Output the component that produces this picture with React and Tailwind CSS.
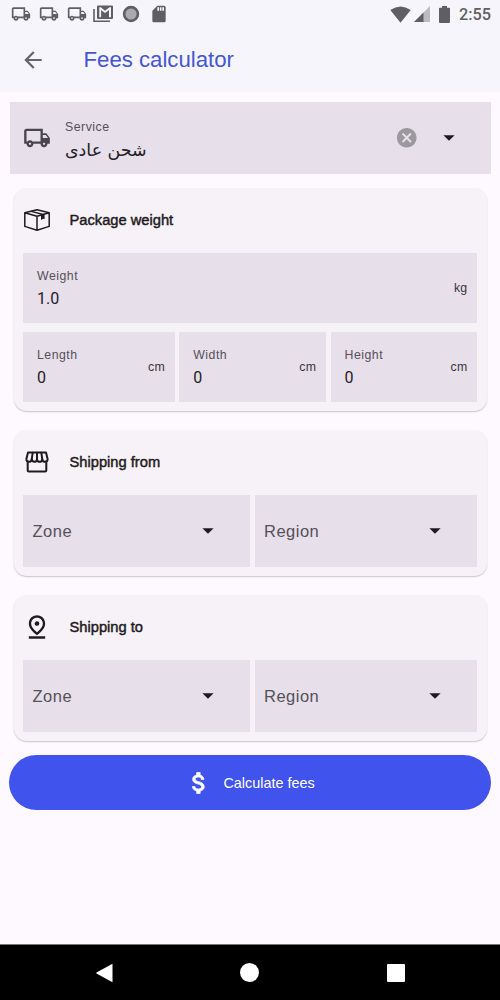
import React from "react";
import {
  MdOutlineLocalShipping,
  MdOutlinePinDrop,
  MdArrowBack,
  MdCancel,
  MdSdCard,
} from "react-icons/md";

function Caret() {
  return (
    <svg className="h-[6px] w-[12px] shrink-0" viewBox="0 0 12 6">
      <path d="M.4 .3h11.2L6 5.8z" fill="#1d1b20" />
    </svg>
  );
}

function DollarIcon() {
  return (
    <svg className="mr-[10px] size-7" viewBox="0 0 24 24">
      <path
        d="M11.800 10.900c-2.270-.590-3-1.200-3-2.150 0-1.090 1.010-1.850 2.700-1.850 1.780 0 2.440.850 2.500 2.100h2.210c-.070-1.720-1.120-3.300-3.210-3.810V3h-3v2.160c-1.940.420-3.500 1.680-3.500 3.610 0 2.310 1.910 3.460 4.700 4.130 2.500.600 3 1.480 3 2.410 0 .690-.490 1.790-2.700 1.790-2.060 0-2.870-.920-2.980-2.100h-2.200c.120 2.190 1.760 3.420 3.680 3.830V21h3v-2.150c1.950-.370 3.500-1.500 3.500-3.550 0-2.840-2.430-3.810-4.700-4.400z"
        fill="white"
        stroke="white"
        strokeWidth=".6"
      />
    </svg>
  );
}

function PackageIcon() {
  return (
    <svg className="h-6 w-7" viewBox="0 0 28 24" fill="none" stroke="#1d1b20" strokeWidth="1.5" strokeLinejoin="round">
      <path d="M1.800 4.800 14 1.800 26.200 4.800v13.600L14 22.200 1.800 18.400zM1.800 4.800 14 8.200 26.200 4.800M14 8.200v14" />
      <path d="M8.200 3.300 20.200 6.500" strokeWidth="1.300" />
      <path d="M18 7.200 21.600 6.100v5l-1.600-.3-2 1.300z" fill="#1d1b20" stroke="none" />
    </svg>
  );
}

function StoreIcon() {
  return (
    <svg className="h-6 w-7" viewBox="0 0 28 24" fill="none" stroke="#1d1b20" strokeWidth="2" strokeLinejoin="round" strokeLinecap="round">
      <path d="M5 2.500h18l1.600 6.400q.2 2.800-2.600 2.900-2.400 0-2.700-2.500-.4 2.500-2.700 2.500T14 9.300q-.4 2.500-2.600 2.500T8.700 9.300Q8.400 11.800 6 11.800 3.200 11.700 3.400 8.900z" />
      <path d="M9.700 2.700 8.700 9.300M14 2.700v6.600M18.300 2.700l1 6.600M4.700 11.800v8.600q0 1.100 1.100 1.100h16.400q1.100 0 1.100-1.100v-8.600" />
    </svg>
  );
}

function StatusBar() {
  return (
    <div className="flex h-7 items-center pr-[9px] pl-[11px] text-[#5f5f63]">
      <div className="flex items-center">
        <MdOutlineLocalShipping className="mr-2 size-5" />
        <MdOutlineLocalShipping className="mr-2 size-5" />
        <MdOutlineLocalShipping className="mr-[6px] size-5" />
        <svg className="mr-[9px] h-[18px] w-5" viewBox="0 0 20 18">
          <path d="M1 4v12.200h16" fill="none" stroke="currentColor" strokeWidth="1.600" />
          <path fillRule="evenodd" d="M5 .5h14q1 0 1 1V13q0 1-1 1H5q-1 0-1-1V1.500q0-1 1-1M6.300 12.200h1.800V5L12 8l4-3v7.200h2V2.200h-1.500L12 5.700 7.700 2.200H6.300z" fill="currentColor" />
        </svg>
        <svg className="mr-[9px] size-[18px]" viewBox="0 0 18 18">
          <circle cx="9" cy="9" r="6.900" fill="#aaa9ac" stroke="currentColor" strokeWidth="2.600" />
        </svg>
        <MdSdCard className="size-5" />
      </div>
      <div className="ml-auto flex items-center">
        <svg className="mr-[3px] h-[17px] w-[21px]" viewBox="0 0 21 17">
          <path d="M.3 4Q10.500-3.200 20.700 4L10.500 16.800z" fill="currentColor" />
        </svg>
        <svg className="mr-[9px] h-4 w-4" viewBox="0 0 16 16">
          <path d="M0 16 16 0v16z" fill="#bcbbc0" />
          <path d="M0 16 9.500 6.500V16z" fill="currentColor" />
        </svg>
        <svg className="mr-[9px] h-[17px] w-[11px]" viewBox="0 0 11 17">
          <path d="M3 0h5v1.800h2.200q.8 0 .8.800V16q0 1-1 1H1q-1 0-1-1V2.600q0-.8.800-.8H3z" fill="currentColor" />
        </svg>
        <span className="pt-px font-[Roboto,sans-serif] text-[16.300px] leading-5 font-medium">2:55</span>
      </div>
    </div>
  );
}

function Measure({ label, value, unit, className }) {
  return (
    <div className={`flex h-[70px] items-center bg-[#e7dfe9] pr-[9.500px] pl-[14px] ${className}`}>
      <div className="flex flex-col pt-[3px]">
        <span className="text-[12.300px] leading-[18px] tracking-[.5px] text-[#55505a]">{label}</span>
        <span className="mt-[2px] font-[Roboto,sans-serif] text-[16px] leading-6 text-[#242128]">{value}</span>
      </div>
      <span className="ml-auto text-[12.300px] leading-4 tracking-[.3px] text-[#38343c]">{unit}</span>
    </div>
  );
}

function Select({ label, className }) {
  return (
    <div className={`flex h-[72px] items-center justify-between bg-[#e7dfe9] pl-[9.500px] ${className}`}>
      <span className="text-[16.500px] leading-6 tracking-[.5px] text-[#55505a]">{label}</span>
      <Caret />
    </div>
  );
}

function Card({ icon, title, className, children }) {
  return (
    <section className={`mx-[13.500px] rounded-[13px] bg-[#f7f2f8] px-[9.500px] shadow-[0_1px_1.500px_rgba(40,30,50,.25)] ${className}`}>
      <div className="flex h-[64.500px] items-center">
        <div className="flex w-7 items-center justify-center text-[#1d1b20]">{icon}</div>
        <h2 className="ml-[18.500px] text-[14.700px] leading-5 text-[#1d1b20] [-webkit-text-stroke:.45px_#1d1b20]">{title}</h2>
      </div>
      {children}
    </section>
  );
}

function ZoneRegion() {
  return (
    <div className="flex justify-between">
      <Select label="Zone" className="w-[227px] pr-[36px]" />
      <Select label="Region" className="w-[222.500px] pr-[36px]" />
    </div>
  );
}

export default function App() {
  return (
    <div className="flex h-[1000px] w-[500px] flex-col overflow-hidden bg-[#fef9fe] font-['Liberation_Sans',sans-serif]">
      <header className="h-[92px] shrink-0 bg-[#f7f5fc]">
        <StatusBar />
        <div className="flex h-16 items-center pl-5">
          <MdArrowBack className="size-[26px] text-[#66646a]" />
          <h1 className="ml-[37.500px] text-[22.200px] leading-7 text-[#4457d1]">Fees calculator</h1>
        </div>
      </header>
      <main className="flex-1 pt-[10px]">
        <div className="mx-[9.500px] flex h-[72px] items-center bg-[#e7dfe9] pr-[36px] pl-[13.500px]">
          <MdOutlineLocalShipping className="size-7 text-[#49454f]" />
          <div className="ml-[14px] flex flex-col items-start pt-[3px]">
            <span className="text-[12.300px] leading-[18px] tracking-[.5px] text-[#55505a]">Service</span>
            <span dir="rtl" className="mt-[2px] font-['DejaVu_Sans',sans-serif] text-[17.400px] leading-6 text-[#242128]">شحن عادى</span>
          </div>
          <MdCancel className="mr-[24px] ml-auto size-[23.500px] text-[#9b999e]" />
          <Caret />
        </div>

        <Card icon={<PackageIcon />} title="Package weight" className="mt-[14px] h-[223px]">
          <Measure label="Weight" value="1.0" unit="kg" className="w-full" />
          <div className="mt-[9px] flex justify-between">
            <Measure label="Length" value="0" unit="cm" className="w-[151.500px]" />
            <Measure label="Width" value="0" unit="cm" className="w-[146.500px]" />
            <Measure label="Height" value="0" unit="cm" className="w-[146.500px]" />
          </div>
        </Card>
        <Card icon={<StoreIcon />} title="Shipping from" className="mt-[19px] h-[146px]">
          <ZoneRegion />
        </Card>
        <Card icon={<MdOutlinePinDrop className="size-[28px]" />} title="Shipping to" className="mt-[19px] h-[146px]">
          <ZoneRegion />
        </Card>

        <button className="mx-[9px] mt-[14px] flex h-[55px] w-[482px] items-center justify-center rounded-full bg-[#4053ec] text-white">
          <DollarIcon />
          <span className="text-[14.400px] leading-5">Calculate fees</span>
        </button>
      </main>
      <nav className="flex h-[56px] shrink-0 items-center border-t border-[#777579] bg-black pl-24">
        <svg className="h-5 w-[17px]" viewBox="0 0 17 20">
          <path d="M16.500 .8v18.400L.5 10.600q-.5-.6 0-1.200z" fill="white" />
        </svg>
        <div className="ml-[127px] size-[19px] rounded-full bg-white" />
        <div className="ml-[128px] size-[18px] rounded-[1px] bg-white" />
      </nav>
    </div>
  );
}
